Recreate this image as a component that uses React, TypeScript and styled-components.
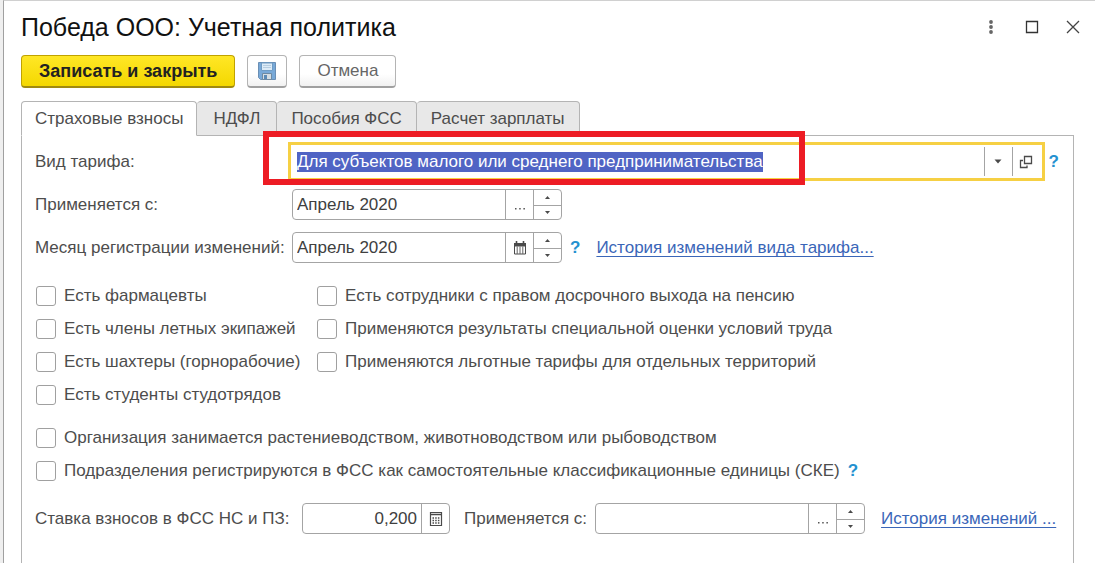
import React, { useEffect, useRef } from "react";
import styled, { createGlobalStyle, css } from "styled-components";

const GlobalStyle = createGlobalStyle`
  * { box-sizing: border-box; }
  body {
    margin: 0;
    background: #efefef;
    color: #4d4d4d;
    font-family: "Liberation Sans", Arial, sans-serif;
    font-size: 17px;
    line-height: 20px;
  }
  button, input { font: inherit; color: inherit; margin: 0; }
  button { cursor: pointer; }
`;

const Window = styled.main`
  display: flex;
  flex-direction: column;
  min-height: 100vh;
  margin-left: 3px;
  padding: 0 21px 0 17px;
  background: #fff;
  border-left: 1px solid #a0a0a0;
  border-top: 1px solid #d0d0d0;
`;

const TitleBar = styled.header`
  display: flex;
  align-items: center;
  justify-content: space-between;
  height: 52px;
  margin-right: -11px;
`;

const Title = styled.h1`
  margin: 0;
  font-size: 25px;
  line-height: 32px;
  font-weight: 400;
  color: #111;
`;

const WindowControls = styled.div`
  display: flex;
  gap: 17px;
`;

const ControlButton = styled.button`
  display: flex;
  align-items: center;
  justify-content: center;
  width: 24px;
  height: 24px;
  padding: 0;
  border: 0;
  background: none;
  color: #444;
`;

const Toolbar = styled.div`
  display: flex;
  gap: 12px;
  padding: 2px 0 13px;
`;

const ToolButton = styled.button<{ $primary?: boolean }>`
  display: flex;
  align-items: center;
  justify-content: center;
  height: 33px;
  padding: 0 17px;
  border: 1px solid #b4b4b4;
  border-bottom: 2px solid #a0a0a0;
  border-radius: 4px;
  background: linear-gradient(#fff 60%, #f1f1f1);
  color: #666;
  ${(p) =>
    p.$primary &&
    css`
      border-color: #c0a200;
      border-bottom-color: #a08a10;
      background: linear-gradient(#ffe726, #f4d800);
      color: #222;
      font-size: 18px;
      font-weight: 700;
    `}
`;

const IconToolButton = styled(ToolButton)`
  width: 40px;
  padding: 0;
`;

const Tabs = styled.div`
  display: flex;
  height: 35px;
  position: relative;
  z-index: 1;
  margin-bottom: -1px;
`;

const Tab = styled.button<{ $active?: boolean }>`
  min-width: 80px;
  padding: 0 ${(p) => (p.$active ? "13px" : "14px")};
  border: 1px solid #b4b4b4;
  border-left-width: ${(p) => (p.$active ? "1px" : "0")};
  border-bottom-color: ${(p) => (p.$active ? "#fff" : "#b4b4b4")};
  border-radius: 4px 4px 0 0;
  background: ${(p) => (p.$active ? "#fff" : "#e8e8e8")};
`;

const Panel = styled.section`
  flex: 1;
  padding: 10px 14px 28px 13px;
  border: 1px solid #b4b4b4;
  border-bottom: 0;
`;

const FormGrid = styled.div`
  display: grid;
  grid-template-columns: 249px minmax(0, 1fr);
  gap: 12px 8px;
  align-items: center;
`;

const Line = styled.div`
  display: flex;
  align-items: center;
  gap: 8px;
`;

const Label = styled.label`
  white-space: nowrap;
`;

const RateLabel = styled(Label)`
  min-width: 259px;
`;

const Field = styled.div<{ $width?: number; $focused?: boolean }>`
  position: relative;
  z-index: ${(p) => (p.$focused ? 2 : 0)};
  display: flex;
  min-width: 0;
  height: 31px;
  ${(p) => (p.$width ? `flex: none; width: ${p.$width}px;` : "flex: 1;")}
  border: 1px solid ${(p) => (p.$focused ? "transparent" : "#a4a4a4")};
  border-radius: ${(p) => (p.$focused ? "0" : "4px")};
  ${(p) => p.$focused && "outline: 3px solid #f6d044; outline-offset: 1px;"}
`;

const TextInput = styled.input<{ $numeric?: boolean }>`
  flex: 1;
  width: 0;
  min-width: 0;
  padding: 0 4px;
  border: 0;
  outline: 0;
  background: transparent;
  color: #404040;
  text-align: ${(p) => (p.$numeric ? "right" : "left")};
  &::selection { background: #5064c4; color: #fff; }
`;

const FieldButton = styled.button`
  display: flex;
  flex: none;
  align-items: center;
  justify-content: center;
  width: 28px;
  padding: 0;
  border: 0;
  border-left: 1px solid #a4a4a4;
  background: none;
  color: #4a4a4a;
`;

const Spinner = styled.div`
  display: grid;
  flex: none;
  grid-template-rows: 1fr 1fr;
  width: 28px;
  border-left: 1px solid #a4a4a4;
`;

const SpinButton = styled.button`
  display: flex;
  align-items: center;
  justify-content: center;
  padding: 0;
  border: 0;
  background: none;
  color: #4a4a4a;
  & + & { border-top: 1px solid #a4a4a4; }
`;

const HelpButton = styled.button`
  padding: 0;
  border: 0;
  background: none;
  color: #2491d0;
  font-weight: 700;
`;

const Link = styled.a`
  margin-left: 8px;
  color: #3a66b8;
  white-space: nowrap;
  text-decoration: underline;
  text-decoration-thickness: 1px;
  text-underline-offset: 3px;
  text-decoration-skip-ink: none;
`;

const Highlight = styled.div`
  position: absolute;
  left: -30px;
  top: -16px;
  width: 542px;
  height: 54px;
  border: 6px solid #ed1c24;
  pointer-events: none;
`;

const CheckColumns = styled.div`
  display: grid;
  grid-template-columns: 281px minmax(0, 1fr);
  padding: 23px 0 0 1px;
`;

const CheckList = styled.div`
  display: flex;
  flex-direction: column;
  gap: 13px;
`;

const WideCheckList = styled(CheckList)`
  padding: 23px 0 22px 1px;
`;

const CheckLabel = styled.label`
  display: flex;
  align-items: center;
  gap: 8px;
  height: 20px;
  white-space: nowrap;
`;

const CheckBox = styled.input`
  appearance: none;
  flex: none;
  width: 20px;
  height: 20px;
  border: 1px solid #a0a0a0;
  border-radius: 3px;
  background: #fff;
  &:checked { background: #f6d044; }
`;

const RateField = styled.div`
  display: flex;
  align-items: center;
  gap: 8px;
  margin-right: 6px;
`;

const SaveIcon = () => (
  <svg width="20" height="20" viewBox="0 0 20 20" aria-hidden="true">
    <path d="M1.500 1.500h17v17h-15l-2-2z" fill="#78a9d8" stroke="#6a8fb5" />
    <path d="M4.500 2h11v7.500h-11z" fill="#dcebf7" stroke="#6f9cc4" />
    <path d="M6 4.500h8M6 6.500h8" stroke="#b6cde0" />
    <path d="M5.500 12.500h9v6h-9z" fill="#d5dde2" stroke="#6d8aa3" />
    <path d="M7 14h3v4H7z" fill="#5b8ab5" />
  </svg>
);

const DotsIcon = () => (
  <svg width="6" height="18" viewBox="0 0 6 18" fill="#666" aria-hidden="true">
    <circle cx="3" cy="4" r="1.900" />
    <circle cx="3" cy="9" r="1.900" />
    <circle cx="3" cy="14" r="1.900" />
  </svg>
);

const MaximizeIcon = () => (
  <svg width="14" height="14" viewBox="0 0 14 14" aria-hidden="true">
    <path d="M1.500 1.500h11v11h-11z" fill="none" stroke="#333" strokeWidth="1.300" />
  </svg>
);

const CloseIcon = () => (
  <svg width="14" height="14" viewBox="0 0 14 14" aria-hidden="true">
    <path d="M1 1l12 12M13 1L1 13" stroke="#444" strokeWidth="1.300" />
  </svg>
);

const DownIcon = () => (
  <svg width="8" height="5" viewBox="0 0 8 5" fill="currentColor" aria-hidden="true">
    <path d="M.5.5h7L4 4.500z" />
  </svg>
);

const OpenIcon = () => (
  <svg width="14" height="14" viewBox="0 0 14 14" fill="none" stroke="currentColor" strokeWidth="1.300" aria-hidden="true">
    <path d="M5.500 1.500h7v7h-7z" />
    <path d="M4 5.500H1.500v7H8V10.500" />
  </svg>
);

const CalendarIcon = () => (
  <svg width="14" height="14" viewBox="0 0 14 14" aria-hidden="true">
    <path d="M1.500 3h11v10h-11z" fill="none" stroke="#4a4a4a" />
    <path d="M1 2h12v3.500H1z" fill="#4a4a4a" />
    <path d="M3.500 0v3M10.500 0v3" stroke="#4a4a4a" strokeWidth="1.600" />
    <path d="M4.200 5.500V13M7 5.500V13M9.800 5.500V13" stroke="#666" />
  </svg>
);

const CalculatorIcon = () => (
  <svg width="14" height="16" viewBox="0 0 14 16" aria-hidden="true">
    <path d="M1.500 1.500h11v13h-11z" fill="none" stroke="#4a4a4a" strokeWidth="1.200" />
    <path d="M2 3.500h10" stroke="#4a4a4a" strokeWidth="1.500" />
    <path d="M3.500 7h7M3.500 9.500h7M3.500 12h7" stroke="#4a4a4a" strokeWidth="1.400" strokeDasharray="1.500 1.200" />
  </svg>
);

const EllipsisIcon = () => (
  <svg width="12" height="14" viewBox="0 0 12 14" fill="#555" aria-hidden="true">
    <path d="M1 10h1.500v1.500H1zM5.200 10h1.500v1.500H5.200zM9.400 10h1.500v1.500H9.400z" />
  </svg>
);

const SpinButtons = () => (
  <Spinner>
    <SpinButton type="button" aria-label="Увеличить">
      <svg width="5" height="3" viewBox="0 0 5 3" fill="currentColor" aria-hidden="true">
        <path d="M0 3h5L2.500 0z" />
      </svg>
    </SpinButton>
    <SpinButton type="button" aria-label="Уменьшить">
      <svg width="5" height="3" viewBox="0 0 5 3" fill="currentColor" aria-hidden="true">
        <path d="M0 0h5L2.500 3z" />
      </svg>
    </SpinButton>
  </Spinner>
);

const Help = () => (
  <HelpButton type="button" aria-label="Справка">
    ?
  </HelpButton>
);

const Check = ({ text }: { text: string }) => (
  <CheckLabel>
    <CheckBox type="checkbox" />
    {text}
  </CheckLabel>
);

const tabs = ["Страховые взносы", "НДФЛ", "Пособия ФСС", "Расчет зарплаты"];

const categories = [
  "Есть фармацевты",
  "Есть члены летных экипажей",
  "Есть шахтеры (горнорабочие)",
  "Есть студенты студотрядов",
];

const conditions = [
  "Есть сотрудники с правом досрочного выхода на пенсию",
  "Применяются результаты специальной оценки условий труда",
  "Применяются льготные тарифы для отдельных территорий",
];

export default function App() {
  const tariffRef = useRef<HTMLInputElement>(null);

  useEffect(() => {
    tariffRef.current?.focus();
    tariffRef.current?.select();
  }, []);

  return (
    <>
      <GlobalStyle />
      <Window>
        <TitleBar>
          <Title>Победа ООО: Учетная политика</Title>
          <WindowControls>
            <ControlButton type="button" aria-label="Меню"><DotsIcon /></ControlButton>
            <ControlButton type="button" aria-label="Развернуть"><MaximizeIcon /></ControlButton>
            <ControlButton type="button" aria-label="Закрыть"><CloseIcon /></ControlButton>
          </WindowControls>
        </TitleBar>

        <Toolbar>
          <ToolButton type="button" $primary>Записать и закрыть</ToolButton>
          <IconToolButton type="button" aria-label="Записать"><SaveIcon /></IconToolButton>
          <ToolButton type="button">Отмена</ToolButton>
        </Toolbar>

        <Tabs role="tablist">
          {tabs.map((name, i) => (
            <Tab key={name} type="button" role="tab" aria-selected={i === 0} $active={i === 0}>
              {name}
            </Tab>
          ))}
        </Tabs>

        <Panel role="tabpanel">
          <FormGrid>
            <Label htmlFor="tariff">Вид тарифа:</Label>
            <Line>
              <Field $focused>
                <TextInput
                  id="tariff"
                  ref={tariffRef}
                  defaultValue="Для субъектов малого или среднего предпринимательства"
                />
                <FieldButton type="button" aria-label="Выбрать"><DownIcon /></FieldButton>
                <FieldButton type="button" aria-label="Открыть"><OpenIcon /></FieldButton>
                <Highlight />
              </Field>
              <Help />
            </Line>

            <Label htmlFor="since">Применяется с:</Label>
            <Line>
              <Field $width={270}>
                <TextInput id="since" defaultValue="Апрель 2020" />
                <FieldButton type="button" aria-label="Выбрать"><EllipsisIcon /></FieldButton>
                <SpinButtons />
              </Field>
            </Line>

            <Label htmlFor="month">Месяц регистрации изменений:</Label>
            <Line>
              <Field $width={270}>
                <TextInput id="month" defaultValue="Апрель 2020" />
                <FieldButton type="button" aria-label="Календарь"><CalendarIcon /></FieldButton>
                <SpinButtons />
              </Field>
              <Help />
              <Link href="#tariff-history">История изменений вида тарифа...</Link>
            </Line>
          </FormGrid>

          <CheckColumns>
            <CheckList>
              {categories.map((text) => <Check key={text} text={text} />)}
            </CheckList>
            <CheckList>
              {conditions.map((text) => <Check key={text} text={text} />)}
            </CheckList>
          </CheckColumns>

          <WideCheckList>
            <Check text="Организация занимается растениеводством, животноводством или рыбоводством" />
            <Line>
              <Check text="Подразделения регистрируются в ФСС как самостоятельные классификационные единицы (СКЕ)" />
              <Help />
            </Line>
          </WideCheckList>

          <Line>
            <RateField>
              <RateLabel htmlFor="rate">Ставка взносов в ФСС НС и ПЗ:</RateLabel>
              <Field $width={148}>
                <TextInput id="rate" $numeric defaultValue="0,200" />
                <FieldButton type="button" aria-label="Калькулятор"><CalculatorIcon /></FieldButton>
              </Field>
            </RateField>
            <Label htmlFor="rate-since">Применяется с:</Label>
            <Field $width={270}>
              <TextInput id="rate-since" defaultValue="" />
              <FieldButton type="button" aria-label="Выбрать"><EllipsisIcon /></FieldButton>
              <SpinButtons />
            </Field>
            <Link href="#rate-history">История изменений ...</Link>
          </Line>
        </Panel>
      </Window>
    </>
  );
}
